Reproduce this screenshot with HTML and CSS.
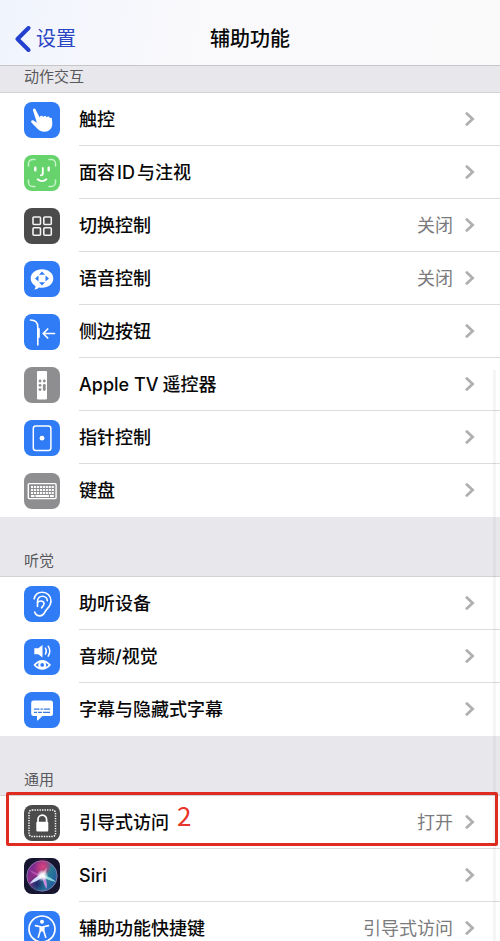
FILE: index.html
```html
<!DOCTYPE html>
<html lang="zh-CN">
<head>
<meta charset="utf-8">
<meta name="viewport" content="width=device-width, initial-scale=1">
<title>辅助功能</title>
<link rel="stylesheet" href="styles.css">
</head>
<body>
<svg class="defs" aria-hidden="true">
  <symbol id="chevron" viewBox="0 0 10 14"><path d="M1.8 1.6 7.6 7 1.8 12.4" fill="none" stroke="#b0b0b2" stroke-width="2.8" stroke-linecap="round" stroke-linejoin="miter"/></symbol>
</svg>
<div class="screen">
  <header class="navbar">
    <a class="back" href="#settings">
      <svg class="back-icon" viewBox="0 0 16 26" aria-hidden="true"><path d="M13.5 2 2.500 13 13.500 24" fill="none" stroke="#2340cf" stroke-width="4" stroke-linecap="round" stroke-linejoin="round"/></svg>
      <span>设置</span>
    </a>
    <h1 class="title">辅助功能</h1>
  </header>
  <main class="content">
    <section>
      <h2 class="group-title group-title-first">动作交互</h2>
      <ul class="list">
        <li class="item"><a class="row" href="#touch">
          <svg class="icon blue" viewBox="0 0 36 36" aria-hidden="true"><path d="M9 8.500c-.5-1.800 1.800-2.700 2.600-1.100l4.100 8.100c.3-2.300 3.100-2.100 3.500-.4.8-1.800 3.300-1.300 3.500.3 1-1.400 3.100-.8 3.200.8.8-1.100 2-.4 2.100.9l.3 4.700c.1 4.800-3.500 8-7.800 8-3.400 0-5.800-1.500-7.800-3.800l-5.100-5.300c-1.400-1.600.4-3.100 1.900-2.100l3.400 2.100Z" fill="#fff"/></svg>
          <span class="body"><span class="label">触控</span><svg class="chevron"><use href="#chevron"/></svg></span></a></li>
        <li class="item"><a class="row" href="#face">
          <svg class="icon green" viewBox="0 0 36 36" aria-hidden="true"><g fill="none" stroke="#fff" stroke-linecap="round" stroke-linejoin="round"><g stroke="#c6f4c8" stroke-width="1.500"><path d="M4.500 11V8.500a4 4 0 0 1 4-4H11M25 4.500h2.500a4 4 0 0 1 4 4V11M31.500 25v2.500a4 4 0 0 1-4 4H25M11 31.500H8.500a4 4 0 0 1-4-4V25"/></g><path d="M11.300 12.800v2.400M24.700 12.800v2.400" stroke-width="2.400"/><path d="M18.800 12.800v6q0 1.500-2 1.500M13.600 24.300q4.400 3.600 8.800 0" stroke-width="1.800"/></g></svg>
          <span class="body"><span class="label">面容<span class="latin">ID</span>与注视</span><svg class="chevron"><use href="#chevron"/></svg></span></a></li>
        <li class="item"><a class="row" href="#switch">
          <svg class="icon dark" viewBox="0 0 36 36" aria-hidden="true"><g fill="none" stroke="#f4f4f4" stroke-width="1.600"><rect x="9" y="9" width="7.500" height="7.500" rx="1"/><rect x="19.800" y="9" width="7.500" height="7.500" rx="1"/><rect x="9" y="19.800" width="7.500" height="7.500" rx="1"/><rect x="19.800" y="19.800" width="7.500" height="7.500" rx="1"/></g></svg>
          <span class="body"><span class="label">切换控制</span><span class="value">关闭</span><svg class="chevron"><use href="#chevron"/></svg></span></a></li>
        <li class="item"><a class="row" href="#voice">
          <svg class="icon blue" viewBox="0 0 36 36" aria-hidden="true"><path d="M18 8.200c6.400 0 11.300 4 11.300 9.300S24.400 26.800 18 26.800c-1 0-2-.1-3-.3-1.200 1.100-2.800 2-4.800 2 1-1 1.400-2.200 1.200-3.500-2.800-1.700-4.700-4.300-4.700-7.500 0-5.300 4.900-9.300 11.300-9.300Z" fill="#fff"/><g fill="#2f7cf6"><path d="m18 10.500 3 3.300h-6zM18 24.500l3-3.300h-6zM11 17.500l3.500-3v6zM25 17.500l-3.500-3v6z"/></g></svg>
          <span class="body"><span class="label">语音控制</span><span class="value">关闭</span><svg class="chevron"><use href="#chevron"/></svg></span></a></li>
        <li class="item"><a class="row" href="#side">
          <svg class="icon blue" viewBox="0 0 36 36" aria-hidden="true"><g fill="none" stroke="#fff" stroke-linecap="round" stroke-linejoin="round"><path d="M6.500 6c5 0 7.300 1.800 7.300 7v18" stroke-width="1.600"/><path d="M14.800 15v8" stroke-width="2"/><path d="M30.500 19.500H19.500M23.700 15l-4.500 4.500 4.500 4.500" stroke-width="1.700"/></g></svg>
          <span class="body"><span class="label">侧边按钮</span><svg class="chevron"><use href="#chevron"/></svg></span></a></li>
        <li class="item"><a class="row" href="#remote">
          <svg class="icon gray" viewBox="0 0 36 36" aria-hidden="true"><rect x="13" y="4" width="10" height="28.500" rx="1.200" fill="#fff"/><g fill="#8e8e90"><circle cx="16" cy="14" r="1.400"/><circle cx="20.300" cy="14" r="1.400"/><circle cx="16" cy="18.300" r="1.400"/><circle cx="16" cy="22.600" r="1.400"/><rect x="18.900" y="16.900" width="2.800" height="7" rx="1.400"/></g></svg>
          <span class="body"><span class="label">Apple TV<span class="latin"></span>遥控器</span><svg class="chevron"><use href="#chevron"/></svg></span></a></li>
        <li class="item"><a class="row" href="#pointer">
          <svg class="icon blue" viewBox="0 0 36 36" aria-hidden="true"><rect x="9.300" y="6" width="17.600" height="24.600" rx="2.500" fill="none" stroke="#fff" stroke-width="1.500"/><circle cx="18" cy="18.200" r="2.400" fill="#fff"/></svg>
          <span class="body"><span class="label">指针控制</span><svg class="chevron"><use href="#chevron"/></svg></span></a></li>
        <li class="item"><a class="row" href="#keyboard">
          <svg class="icon gray" viewBox="0 0 36 36" aria-hidden="true"><rect x="4.300" y="10.600" width="27.800" height="15" rx="1" fill="none" stroke="#fff" stroke-width="1.400"/><g fill="none" stroke="#fff" stroke-width="1.900"><path d="M7 14h22.800M7 17h22.800M7 20h22.800" stroke-dasharray="2.100 .86"/><path d="M7 23h3.400M11.400 23h13.600M26 23h3.800"/></g></svg>
          <span class="body"><span class="label">键盘</span><svg class="chevron"><use href="#chevron"/></svg></span></a></li>
      </ul>
    </section>
    <section>
      <h2 class="group-title">听觉</h2>
      <ul class="list">
        <li class="item"><a class="row" href="#hearing">
          <svg class="icon blue" viewBox="0 0 36 36" aria-hidden="true"><g fill="none" stroke="#fff" stroke-width="1.600" stroke-linecap="round"><path d="M10.200 12.800C11 8.800 14.200 6.300 18.300 6.300c5 0 8.700 3.700 8.700 8.700 0 4.500-2.600 6.500-4.700 8.900-2.100 2.500-2.300 6-6.300 6-2.300 0-4.300-1.300-5.300-3.800"/><path d="M13.500 20.500v-5c0-3.200 2.100-5.300 5-5.300 2.800 0 4.800 2 4.800 4.600"/><path d="M13.600 16.500c.8-1.100 1.900-1.500 3.200-1.500 1.900 0 3.200 1.200 3.200 2.800 0 2.100-1.700 2.500-2.400 4"/></g></svg>
          <span class="body"><span class="label">助听设备</span><svg class="chevron"><use href="#chevron"/></svg></span></a></li>
        <li class="item"><a class="row" href="#audio">
          <svg class="icon blue" viewBox="0 0 36 36" aria-hidden="true"><path d="M10.300 9.200h4l4.200-3.200v12.500l-4.200-3.200h-4z" fill="#fff"/><path d="M21.400 9.200q1.800 3 0 6M24.200 7.200q3.200 5 0 10" fill="none" stroke="#fff" stroke-width="1.500" stroke-linecap="round"/><path d="M10.500 25.900q7.700-8.200 15.400 0-7.700 8.200-15.400 0Z" fill="none" stroke="#fff" stroke-width="1.700" stroke-linejoin="round"/><circle cx="18.200" cy="25.900" r="2.900" fill="none" stroke="#fff" stroke-width="2.100"/></svg>
          <span class="body"><span class="label">音频/视觉</span><svg class="chevron"><use href="#chevron"/></svg></span></a></li>
        <li class="item"><a class="row" href="#captions">
          <svg class="icon blue" viewBox="0 0 36 36" aria-hidden="true"><path d="M9.500 8.500h17.200q2.300 0 2.300 2.300v11q0 2.300-2.300 2.300h-8.200l-4.500 4.200c-.7.600-1 .2-1-.5v-3.700H9.500q-2.300 0-2.300-2.300v-11q0-2.300 2.300-2.300Z" fill="#fff"/><path d="M10 17.200h5.500m1 0h2.300m1 0H26M10 20.300h3m1 0h4m1 0h7" fill="none" stroke="#3b78df" stroke-width="1.300"/></svg>
          <span class="body"><span class="label">字幕与隐藏式字幕</span><svg class="chevron"><use href="#chevron"/></svg></span></a></li>
      </ul>
    </section>
    <section>
      <h2 class="group-title">通用</h2>
      <ul class="list">
        <li class="item marked"><a class="row" href="#guided">
          <svg class="icon dark" viewBox="0 0 36 36" aria-hidden="true"><rect x="5" y="5" width="26.500" height="26.500" rx="3" fill="none" stroke="#fff" stroke-width="1.500" stroke-dasharray="1.400 1.100"/><path d="M14 17v-2.500a4.300 4.300 0 0 1 8.600 0V17" fill="none" stroke="#fff" stroke-width="1.700"/><rect x="12.300" y="16.800" width="12" height="9.800" rx="1" fill="#fff"/></svg>
          <span class="body"><span class="label">引导式访问<span class="step">2</span></span><span class="value">打开</span><svg class="chevron"><use href="#chevron"/></svg></span></a></li>
        <li class="item"><a class="row" href="#siri">
          <svg class="icon siri" viewBox="0 0 36 36" aria-hidden="true">
            <defs>
              <linearGradient id="orb" x1="0" y1="0.200" x2="1" y2="0.800"><stop offset="0" stop-color="#6b2b96"/><stop offset=".35" stop-color="#9a2d83"/><stop offset=".6" stop-color="#287f98"/><stop offset="1" stop-color="#2456a0"/></linearGradient>
              <radialGradient id="pink"><stop offset="0" stop-color="#d9427f"/><stop offset="1" stop-color="#d9427f" stop-opacity="0"/></radialGradient>
              <radialGradient id="navy"><stop offset="0" stop-color="#17286a"/><stop offset="1" stop-color="#17286a" stop-opacity="0"/></radialGradient>
              <radialGradient id="glow"><stop offset="0" stop-color="#fff"/><stop offset=".4" stop-color="#fff" stop-opacity=".8"/><stop offset="1" stop-color="#fff" stop-opacity="0"/></radialGradient>
            </defs>
            <circle cx="18" cy="18" r="15.200" fill="url(#orb)" stroke="#9382b8" stroke-width=".8"/>
            <circle cx="19" cy="9" r="9" fill="url(#pink)"/>
            <circle cx="13" cy="26" r="9" fill="url(#navy)"/>
            <path d="M18 17C14 16 9 13 5 12c4 4 8 6 13 7Z" fill="#cf67c7" opacity=".6"/>
            <path d="M18 16C13 18 8 22 5.500 26c5-2 9-4 14-7Z" fill="#d3dcff"/>
            <path d="M18 18c1 5 2 9 4.500 13 1-5 0-9-2-13Z" fill="#c88bdc"/>
            <path d="M18 17c4 0 10 3 14 7-5-1-10-3-14-5Z" fill="#a7ece8" opacity=".8"/>
            <path d="M17 18c2-4 4-7 6-8-.5 4-2 6-4 9Z" fill="#ef9cba" opacity=".8"/>
            <circle cx="18.500" cy="17.500" r="6" fill="url(#glow)"/>
          </svg>
          <span class="body"><span class="label">Siri</span><svg class="chevron"><use href="#chevron"/></svg></span></a></li>
        <li class="item"><a class="row" href="#shortcut">
          <svg class="icon blue" viewBox="0 0 36 36" aria-hidden="true"><circle cx="18" cy="18" r="13" fill="none" stroke="#fff" stroke-width="1.700"/><circle cx="18" cy="10.800" r="2" fill="#fff"/><path d="M11.500 14.600 16.300 15.800v4L14.300 26.300M24.500 14.600 19.700 15.800v4L21.700 26.300" fill="none" stroke="#fff" stroke-width="1.600" stroke-linecap="round" stroke-linejoin="round"/><path d="M15.800 15.200h4.400v5.300h-4.400z" fill="#fff"/></svg>
          <span class="body"><span class="label">辅助功能快捷键</span><span class="value">引导式访问</span><svg class="chevron"><use href="#chevron"/></svg></span></a></li>
      </ul>
    </section>
  </main>
</div>
</body>
</html>
```
FILE: styles.css
```css
* {
  box-sizing: border-box;
}

body {
  margin: 0;
  background: #fff;
  color: #080808;
  font-family: Inter, "Noto Sans CJK SC", sans-serif;
  font-size: 18px;
  line-height: 24px;
}

a {
  color: inherit;
  text-decoration: none;
}

.defs {
  display: none;
}

.screen {
  position: relative;
  height: 100vh;
  overflow: hidden;
}

/* faint scroll track along the right edge */
.screen::after {
  content: "";
  position: absolute;
  top: 370px;
  right: 4px;
  bottom: 0;
  width: 3px;
  background: rgba(60, 60, 70, 0.05);
}

.navbar {
  display: grid;
  grid-template-columns: 1fr auto 1fr;
  align-items: center;
  height: 66px;
  padding: 13px 15px 0;
  border-bottom: 1px solid #c6c6c9;
  background: linear-gradient(100deg, #f0f4fd, #f9f9fc 35%, #fafafb);
}

.back {
  display: flex;
  align-items: center;
  gap: 5px;
  color: #2a45c4;
  font-size: 20px;
}

.back-icon {
  width: 16px;
  height: 26px;
}

.title {
  margin: 0;
  font-size: 20px;
  font-weight: 500;
}

.group-title {
  display: flex;
  align-items: flex-end;
  height: 60px;
  margin: 0;
  padding: 0 24px 3px;
  border-bottom: 1px solid #d2d2d5;
  background: #e8e8ec;
  color: #59595d;
  font-size: 15px;
  font-weight: 400;
}

.group-title-first {
  height: 27px;
}

.list {
  margin: 0;
  padding: 0;
  list-style: none;
}

.item {
  position: relative;
}

.row {
  display: flex;
  align-items: stretch;
  gap: 19px;
  height: 53px;
  padding-left: 24px;
}

.icon {
  flex: none;
  align-self: center;
  width: 36px;
  height: 36px;
  border-radius: 8px;
}

.blue {
  background: #2f7cf6;
}

.green {
  background: #67d36d;
}

.dark {
  background: #4b4b4c;
}

.gray {
  background: #8e8e90;
}

.siri {
  background: #15152f;
}

.body {
  display: flex;
  flex: 1;
  align-items: center;
  gap: 12px;
  padding-right: 25px;
  border-bottom: 1px solid #dcdcde;
}

.item:last-child .body {
  border-bottom-color: transparent;
}

.label,
.value {
  padding-top: 2px;
}

.label {
  display: flex;
  flex: 1;
  white-space: pre;
  font-weight: 500;
}

.latin {
  margin: 0 2px;
}

.value {
  color: #7b7b7e;
}

.chevron {
  flex: none;
  width: 10px;
  height: 14px;
}

/* callout frame around one row */
.marked::after {
  content: "";
  position: absolute;
  inset: -4px 2px 3px 6px;
  border: 3px solid #e02b20;
  border-radius: 2px;
  pointer-events: none;
}

.step {
  position: relative;
  top: -8px;
  margin-left: 8px;
  color: #e8332a;
  font-family: "Noto Sans CJK SC", sans-serif;
  font-size: 26px;
  font-weight: 400;
}
```
